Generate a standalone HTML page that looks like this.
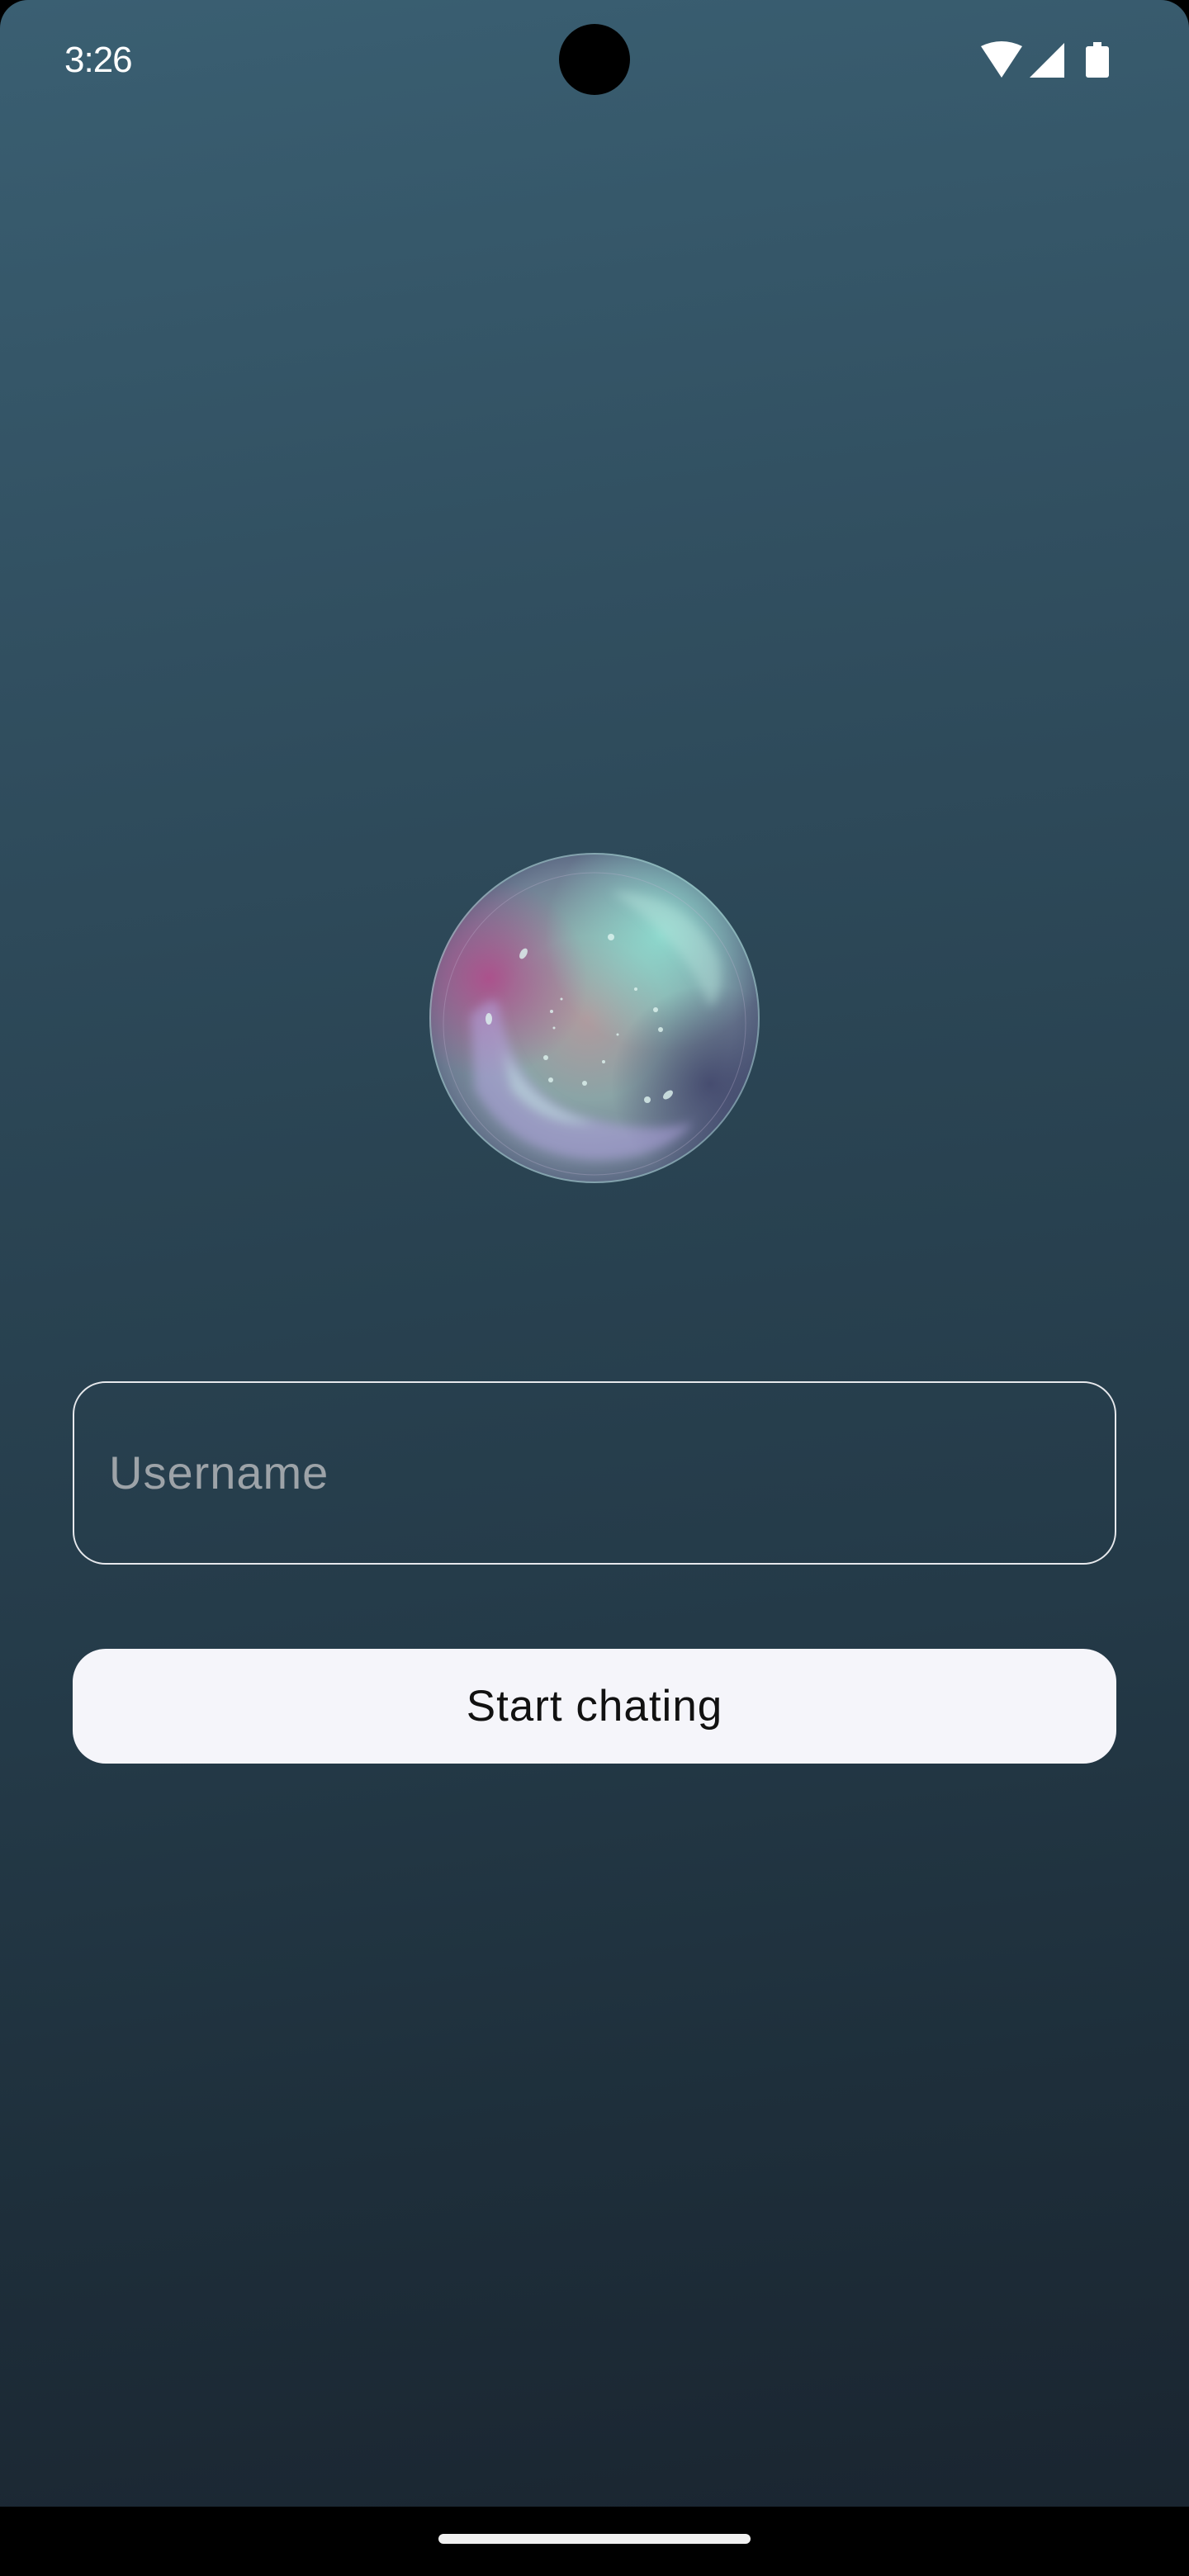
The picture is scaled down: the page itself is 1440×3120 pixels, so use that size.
<!DOCTYPE html>
<html><head><meta charset="utf-8"><style>
html,body{margin:0;padding:0;background:#000;}
body{width:1440px;height:3120px;position:relative;overflow:hidden;font-family:"Liberation Sans",sans-serif;}
.bg{position:absolute;left:0;top:0;width:1440px;height:3036px;border-radius:34px 34px 0 0;
background:linear-gradient(172deg,#3a5f72 0%,#314f60 25%,#2a4453 45%,#243a48 65%,#1e2f3b 82%,#1a2530 100%);}
.time{position:absolute;left:78px;top:48px;color:#fff;font-size:44px;letter-spacing:-1px;}
.cam{position:absolute;left:677px;top:29px;width:86px;height:86px;border-radius:50%;background:#000;}
.input{position:absolute;left:88px;top:1673px;width:1260px;height:218px;border:2px solid #e6e8ec;border-radius:40px;}
.input span{position:absolute;left:42px;top:76px;font-size:56px;color:#9da3a8;letter-spacing:1px;}
.btn{position:absolute;left:88px;top:1997px;width:1264px;height:139px;border-radius:40px;background:#f5f5fa;text-align:center;line-height:139px;font-size:53px;color:#111;letter-spacing:1px;}
.home{position:absolute;left:531px;top:3069px;width:378px;height:12px;border-radius:6px;background:#f0f0f0;}
</style></head><body>
<div class="bg"></div>
<div class="time">3:26</div>
<div class="cam"></div>
<svg style="position:absolute;left:1180px;top:48px" width="180" height="50" viewBox="0 0 180 50">
<path d="M8 8 Q33 -4 58 8 L33 46 Z" fill="#fff"/>
<path d="M67 46 L109 4 L109 46 Z" fill="#fff"/>
<rect x="135" y="8" width="28" height="38" rx="3" fill="#fff"/>
<rect x="144" y="3" width="10" height="6" fill="#fff"/>
</svg>
<svg style="position:absolute;left:500px;top:1020px" width="440" height="440" viewBox="0 0 440 440">
<defs>
<radialGradient id="core" cx="0.48" cy="0.5" r="0.55">
<stop offset="0" stop-color="#b09a9e"/>
<stop offset="0.45" stop-color="#8aa4a6"/>
<stop offset="0.8" stop-color="#6f7f94"/>
<stop offset="1" stop-color="#4e5a78"/>
</radialGradient>
<radialGradient id="pink" cx="0.18" cy="0.38" r="0.3">
<stop offset="0" stop-color="#b04a8a" stop-opacity="0.9"/>
<stop offset="1" stop-color="#b04a8a" stop-opacity="0"/>
</radialGradient>
<radialGradient id="teal" cx="0.7" cy="0.25" r="0.35">
<stop offset="0" stop-color="#8fe0d2" stop-opacity="0.9"/>
<stop offset="1" stop-color="#8fe0d2" stop-opacity="0"/>
</radialGradient>
<radialGradient id="dark" cx="0.85" cy="0.7" r="0.3">
<stop offset="0" stop-color="#3b3f66" stop-opacity="0.8"/>
<stop offset="1" stop-color="#3b3f66" stop-opacity="0"/>
</radialGradient>
<filter id="bl"><feGaussianBlur stdDeviation="6"/></filter>
</defs>
<circle cx="220" cy="213" r="200" fill="url(#core)"/>
<circle cx="220" cy="213" r="200" fill="url(#pink)"/>
<circle cx="220" cy="213" r="200" fill="url(#teal)"/>
<circle cx="220" cy="213" r="200" fill="url(#dark)"/>
<g filter="url(#bl)">
<path d="M70 210 Q100 180 105 200 Q120 300 200 330 Q280 355 340 340 Q300 385 220 385 Q120 380 75 300 Z" fill="#b8a8e8" opacity="0.5"/>
<path d="M110 250 Q140 320 220 340 Q160 345 120 300 Z" fill="#c8f0e6" opacity="0.45"/>
<path d="M240 60 Q330 60 370 140 Q380 180 360 200 Q330 120 240 60 Z" fill="#bfe8e0" opacity="0.4"/>
</g>
<circle cx="220" cy="213" r="199" fill="none" stroke="#a8d8d4" stroke-width="2" opacity="0.5"/>
<circle cx="220" cy="220" r="183" fill="none" stroke="#c6b8d6" stroke-width="1" opacity="0.3"/>
<g fill="#dff4f0" opacity="0.8">
<circle cx="240" cy="115" r="4"/><circle cx="294" cy="203" r="3"/><circle cx="300" cy="227" r="3"/>
<circle cx="161" cy="261" r="3"/><circle cx="167" cy="288" r="3"/><circle cx="208" cy="292" r="3"/>
<circle cx="231" cy="266" r="2"/><circle cx="270" cy="178" r="2"/><circle cx="168" cy="205" r="2"/>
<circle cx="180" cy="190" r="1.5"/><circle cx="171" cy="225" r="1.5"/><circle cx="248" cy="233" r="1.5"/>
<ellipse cx="134" cy="135" rx="4" ry="7" transform="rotate(30 134 135)"/>
<ellipse cx="92" cy="214" rx="4" ry="7"/>
<ellipse cx="309" cy="306" rx="4" ry="7" transform="rotate(50 309 306)"/>
<circle cx="284" cy="312" r="4"/>
</g>
</svg>
<div class="input"><span>Username</span></div>
<div class="btn">Start chating</div>
<div class="home"></div>
</body></html>
